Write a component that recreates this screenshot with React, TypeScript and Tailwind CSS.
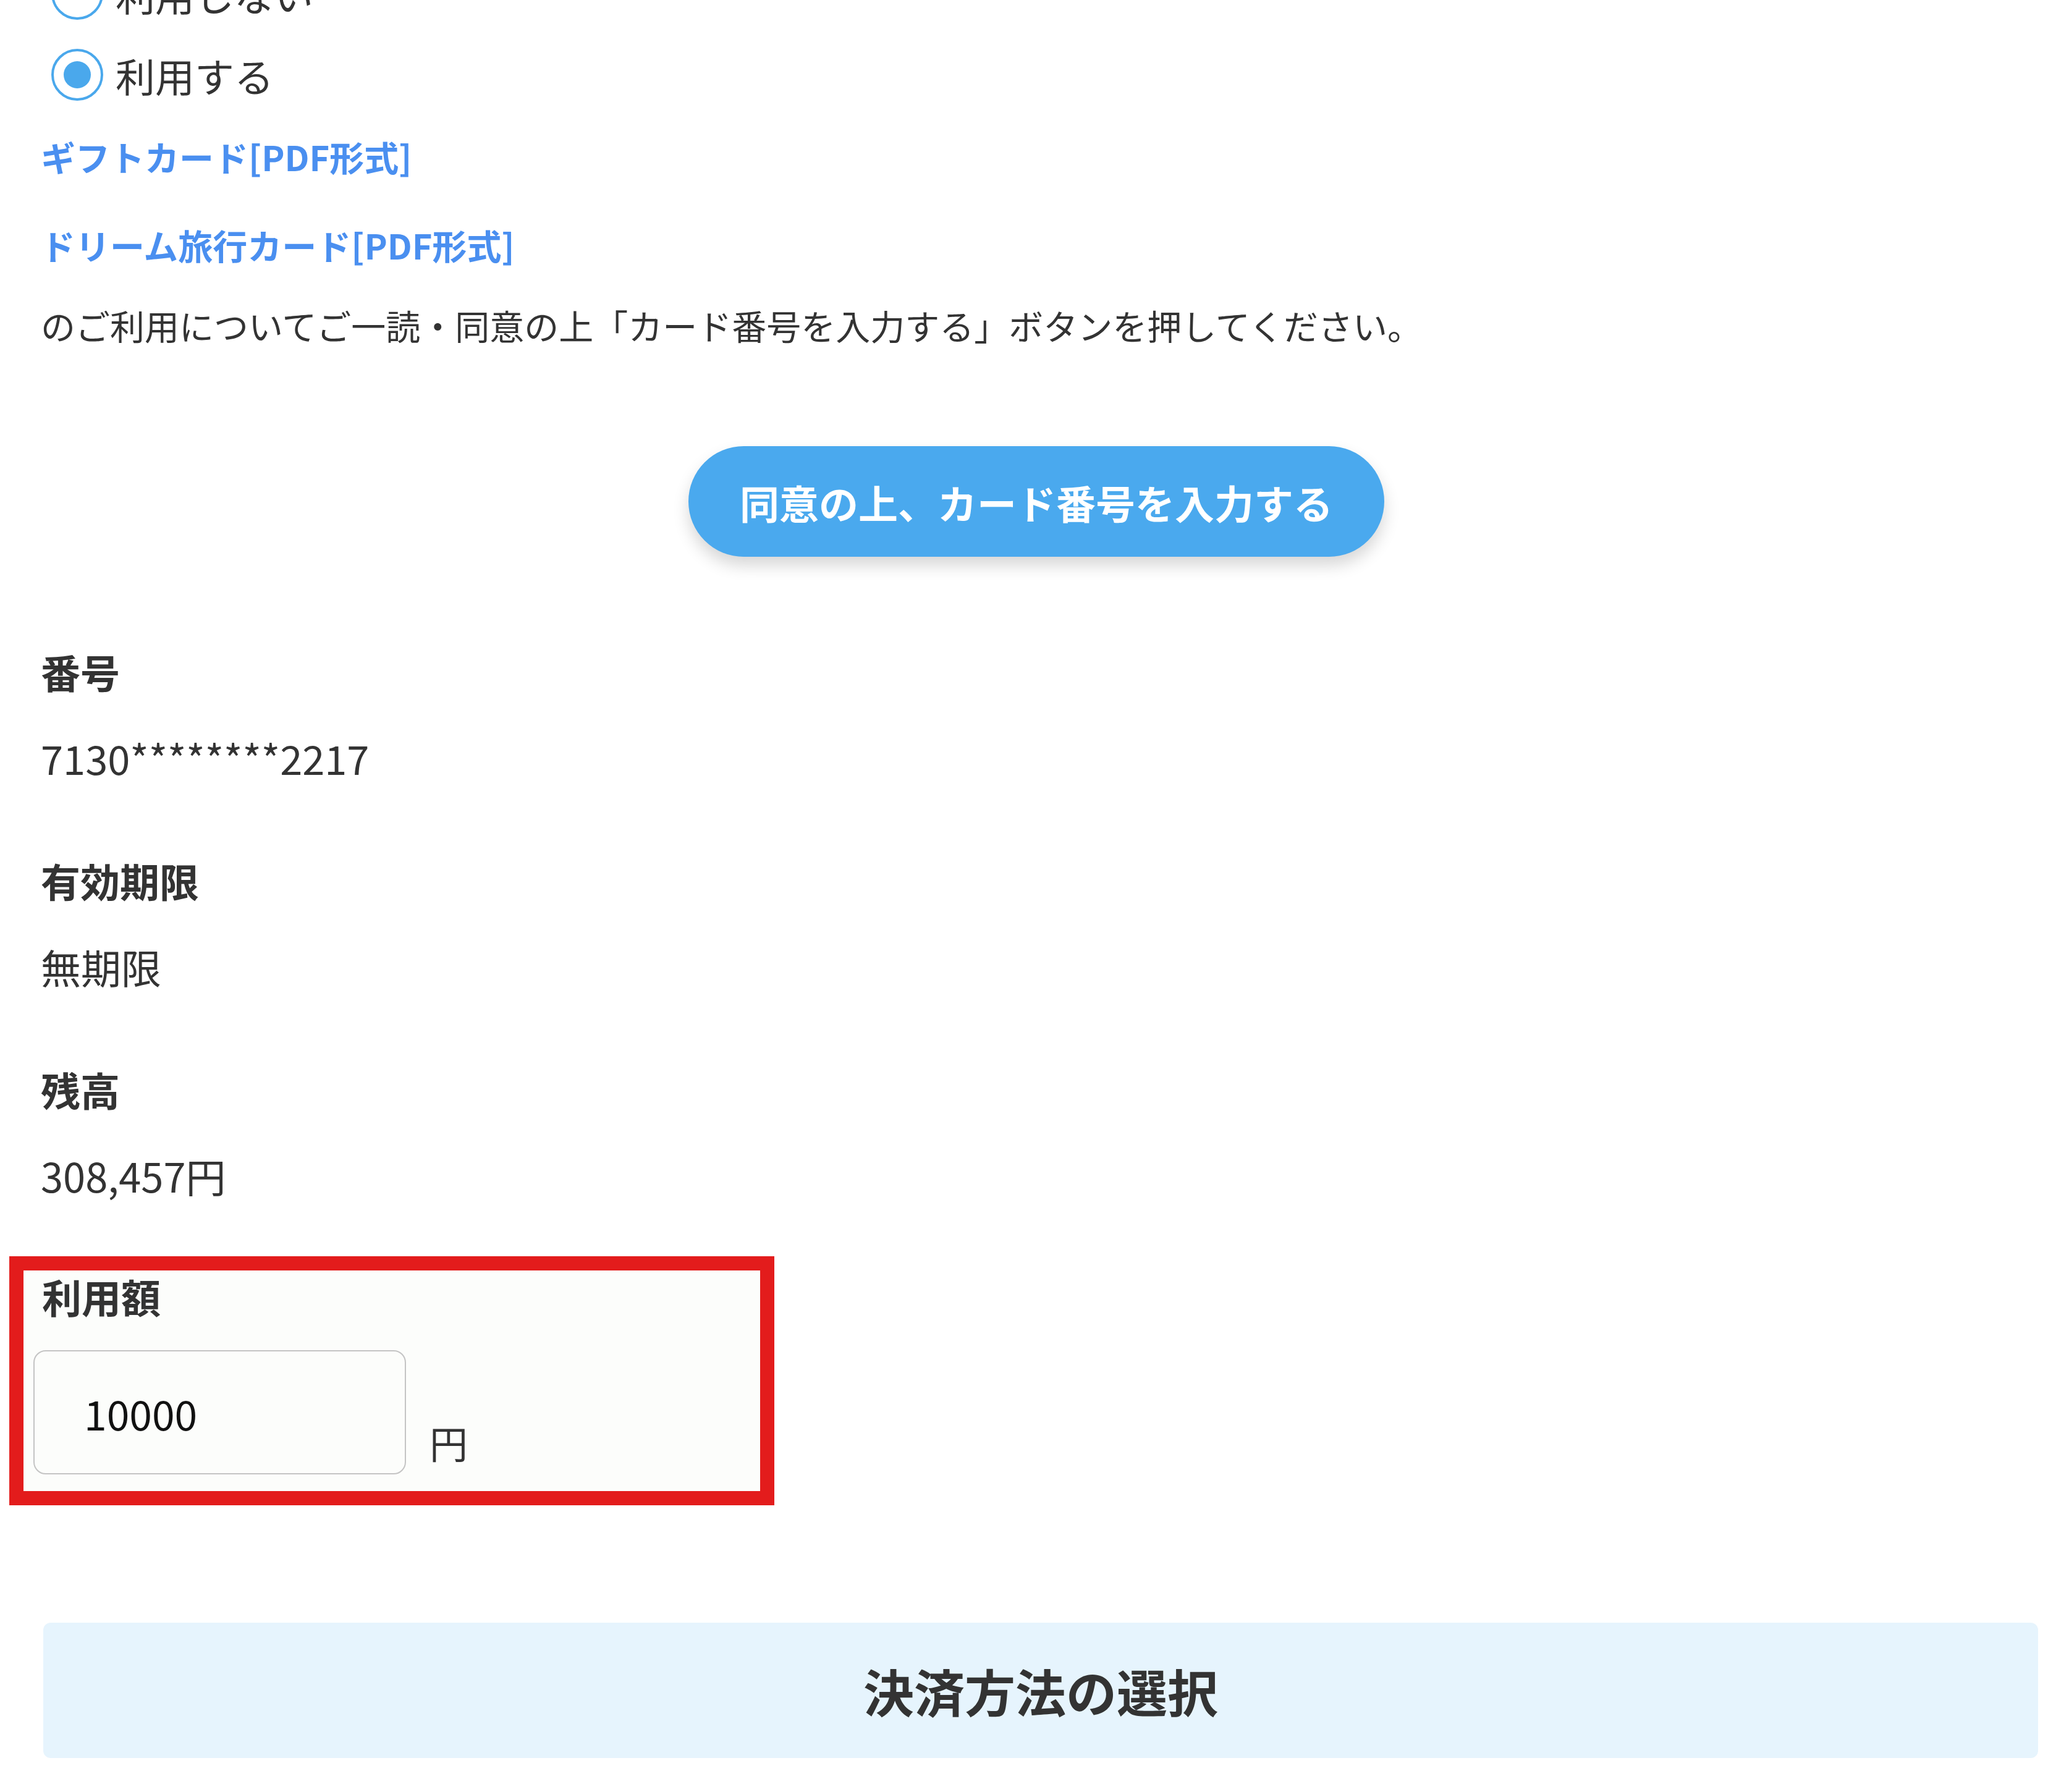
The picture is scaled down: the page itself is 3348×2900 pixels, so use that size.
import { useState } from "react";

const jp = "font-['Noto_Sans_CJK_JP','Noto_Sans',sans-serif]";

type Field = { label: string; value: string };

const fields: Field[] = [
  { label: "番号", value: "7130********2217" },
  { label: "有効期限", value: "無期限" },
  { label: "残高", value: "308,457円" },
];

function Radio({
  label,
  checked,
  onSelect,
}: {
  label: string;
  checked: boolean;
  onSelect: () => void;
}) {
  return (
    <label
      onClick={onSelect}
      className="flex h-[131px] cursor-pointer items-center gap-[20px] pl-[17px]"
    >
      <span className="flex h-[84px] w-[84px] items-center justify-center rounded-full border-[4px] border-[#4aa8ec] bg-white">
        {checked && <span className="h-[44px] w-[44px] rounded-full bg-[#4aa8ec]" />}
      </span>
      <span className="text-[64px] leading-none text-[#333]">{label}</span>
    </label>
  );
}

export default function App() {
  const [useCard, setUseCard] = useState(true);
  const [amount, setAmount] = useState("10000");

  return (
    <div className={`h-[2900px] w-[3348px] overflow-hidden bg-white ${jp}`}>
      <div className="-mt-[76px] pl-[66px] pr-[50px]">
        {/* Radios */}
        <Radio label="利用しない" checked={!useCard} onSelect={() => setUseCard(false)} />
        <Radio label="利用する" checked={useCard} onSelect={() => setUseCard(true)} />

        {/* Terms links */}
        <a className="mt-[31px] block text-[56px] font-bold leading-[72px] text-[#4a8ff0]">
          ギフトカード[PDF形式]
        </a>
        <a className="mt-[71px] block text-[56px] font-bold leading-[72px] text-[#4a8ff0]">
          ドリーム旅行カード[PDF形式]
        </a>
        <p className="mt-[58px] text-[56px] leading-[72px] text-[#333]">
          のご利用についてご一読・同意の上「カード番号を入力する」ボタンを押してください。
        </p>

        {/* Agree button */}
        <div className="mt-[160px] flex justify-center pr-[10px]">
          <button className="h-[179px] w-[1126px] rounded-full bg-[#4aa9ee] text-[64px] font-bold text-white shadow-[0_14px_26px_rgba(0,0,0,0.16)]">
            同意の上、カード番号を入力する
          </button>
        </div>

        {/* Card details */}
        <div className="mt-[145px] flex flex-col gap-[118px]">
          {fields.map((f) => (
            <div key={f.label} className="flex flex-col gap-[60px]">
              <span className="text-[64px] font-bold leading-[80px] text-[#333]">{f.label}</span>
              <span className="text-[65px] leading-[80px] text-[#333]">{f.value}</span>
            </div>
          ))}
        </div>

        {/* Amount */}
        <div className="-ml-[51px] mt-[91px] w-[1238px] border-[23px] border-[#e31c1c] bg-[#fcfdfb] pb-[27px] pl-[16px] pt-[1px]">
          <div className="pl-[14px] text-[64px] font-bold leading-[80px] text-[#333]">利用額</div>
          <div className="mt-[48px] flex items-end gap-[38px]">
            <input
              value={amount}
              onChange={(e) => setAmount(e.target.value)}
              className="h-[201px] w-[603px] rounded-[20px] border-2 border-[#c4c4c4] bg-[#fcfdfb] pl-[80px] text-[66px] text-[#111] outline-none"
            />
            <span className="pb-[21px] text-[62px] leading-none text-[#333]">円</span>
          </div>
        </div>

        {/* Next section header */}
        <div className="ml-[4px] mt-[190px] flex h-[219px] items-center justify-center rounded-[12px] bg-[#e6f4fd]">
          <h2 className="text-[82px] font-bold text-[#333]">決済方法の選択</h2>
        </div>
      </div>
    </div>
  );
}
